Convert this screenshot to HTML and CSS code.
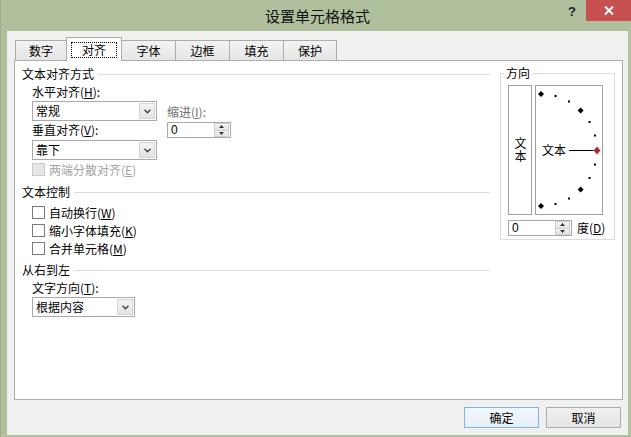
FILE: index.html
```html
<!DOCTYPE html>
<html lang="zh-CN">
<head>
<meta charset="utf-8">
<title>设置单元格格式</title>
<link rel="stylesheet" href="styles.css">
</head>
<body>
<div class="frame">
  <div class="titlebar">
    <div class="title">设置单元格格式</div>
    <div class="tb-right">
      <div class="tb-help">?</div>
      <div class="tb-close"><svg width="10" height="9" viewBox="0 0 10 9"><path d="M1 0.5 L9 8.5 M9 0.5 L1 8.5" stroke="#fff" stroke-width="2" fill="none"/></svg></div>
    </div>
  </div>
  <div class="client">
    <div class="tabs">
      <div class="tab w52">数字</div>
      <div class="tab active"><span class="focus">对齐</span></div>
      <div class="tab w55">字体</div>
      <div class="tab w55">边框</div>
      <div class="tab w55">填充</div>
      <div class="tab w54">保护</div>
    </div>
    <div class="panel">
      <div class="left">
        <div class="group-head"><span>文本对齐方式</span><i class="rule"></i></div>
        <div class="align-block">
          <div class="align-col">
            <div class="lbl">水平对齐(<u>H</u>):</div>
            <div class="select sel-a"><span class="val">常规</span><span class="dd"><svg width="7" height="5" viewBox="0 0 7 5"><path d="M0.5 0.8 L3.5 3.8 L6.5 0.8" stroke="#404040" stroke-width="1.4" fill="none"/></svg></span></div>
            <div class="lbl lbl-v">垂直对齐(<u>V</u>):</div>
            <div class="select sel-b"><span class="val">靠下</span><span class="dd"><svg width="7" height="5" viewBox="0 0 7 5"><path d="M0.5 0.8 L3.5 3.8 L6.5 0.8" stroke="#404040" stroke-width="1.4" fill="none"/></svg></span></div>
          </div>
          <div class="indent-col">
            <div class="lbl grey">缩进(<u>I</u>):</div>
            <div class="spin indent-spin">
              <span class="val">0</span>
              <span class="btns">
                <span class="sb"><svg width="5" height="3" viewBox="0 0 5 3"><path d="M0 3 L2.5 0 L5 3Z" fill="#333"/></svg></span>
                <span class="sb"><svg width="5" height="3" viewBox="0 0 5 3"><path d="M0 0 L2.5 3 L5 0Z" fill="#333"/></svg></span>
              </span>
            </div>
          </div>
        </div>
        <div class="check disabled first-check"><span class="box"></span>两端分散对齐(<u>E</u>)</div>
        <div class="group-head gh2"><span>文本控制</span><i class="rule"></i></div>
        <div class="check-list">
          <div class="check tall"><span class="box"></span>自动换行(<u>W</u>)</div>
          <div class="check tall"><span class="box"></span>缩小字体填充(<u>K</u>)</div>
          <div class="check tall"><span class="box"></span>合并单元格(<u>M</u>)</div>
        </div>
        <div class="group-head gh3"><span>从右到左</span><i class="rule"></i></div>
        <div class="lbl indent lbl-dir">文字方向(<u>T</u>):</div>
        <div class="select sel-c indent-sel"><span class="val">根据内容</span><span class="dd"><svg width="7" height="5" viewBox="0 0 7 5"><path d="M0.5 0.8 L3.5 3.8 L6.5 0.8" stroke="#404040" stroke-width="1.4" fill="none"/></svg></span></div>
      </div>
      <fieldset class="orient">
        <legend>方向</legend>
        <div class="orient-boxes">
          <div class="vtext"><span class="vword">文本</span></div>
          <div class="dial">
            <svg width="66" height="128" viewBox="0 0 66 128">
              <g fill="#000">
                <path d="M5 5 L8 8 L5 11 L2 8Z"/>
                <path d="M44.6 21.4 L47.6 24.4 L44.6 27.4 L41.6 24.4Z"/>
                <path d="M44.6 100.6 L47.6 103.6 L44.6 106.6 L41.6 103.6Z"/>
                <path d="M5 117 L8 120 L5 123 L2 120Z"/>
                <rect x="18.5" y="9" width="2" height="2"/>
                <rect x="32" y="14.5" width="2" height="2"/>
                <rect x="52.5" y="35" width="2" height="2"/>
                <rect x="58" y="48.5" width="2" height="2"/>
                <rect x="58" y="77.5" width="2" height="2"/>
                <rect x="52.5" y="91" width="2" height="2"/>
                <rect x="32" y="111.5" width="2" height="2"/>
                <rect x="18.5" y="117" width="2" height="2"/>
              </g>
              <line x1="33" y1="64.5" x2="59" y2="64.5" stroke="#000" stroke-width="1"/>
              <path d="M61 60.5 L64.5 64.5 L61 68.5 L57.5 64.5Z" fill="#a3282b" stroke="#e9a7a5" stroke-width="0.6"/>
              <text x="6" y="68.8" class="dial-text">文本</text>
            </svg>
          </div>
        </div>
        <div class="deg-row">
          <div class="spin deg-spin">
            <span class="val">0</span>
            <span class="btns">
              <span class="sb"><svg width="5" height="3" viewBox="0 0 5 3"><path d="M0 3 L2.5 0 L5 3Z" fill="#333"/></svg></span>
              <span class="sb"><svg width="5" height="3" viewBox="0 0 5 3"><path d="M0 0 L2.5 3 L5 0Z" fill="#333"/></svg></span>
            </span>
          </div>
          <span class="deg-lbl">度(<u>D</u>)</span>
        </div>
      </fieldset>
    </div>
    <div class="buttons">
      <button class="btn default">确定</button>
      <button class="btn">取消</button>
    </div>
  </div>
</div>
</body>
</html>
```

FILE: styles.css
```css
html, body {
  margin: 0;
  padding: 0;
}
body {
  width: 631px;
  height: 437px;
  overflow: hidden;
  font-family: "Noto Sans CJK SC", "Noto Sans CJK JP", sans-serif;
  font-size: 12px;
  color: #000;
}
u { text-decoration: underline; text-underline-offset: 1px; }

.frame {
  height: 437px;
  background: #b0bf9c;
  display: flex;
  flex-direction: column;
  box-sizing: border-box;
  border-left: 1px solid #9fae8a;
}

/* title bar */
.titlebar {
  flex: none;
  height: 31px;
  display: grid;
  grid-template-columns: 1fr auto 1fr;
}
.title {
  grid-column: 2;
  font-size: 15px;
  line-height: 31px;
  color: #111;
  padding-left: 3px;
}
.tb-right {
  grid-column: 3;
  display: flex;
  justify-content: flex-end;
  align-items: flex-start;
}
.tb-help {
  width: 14px;
  margin-right: 7px;
  text-align: center;
  font-family: "Liberation Sans", sans-serif;
  font-weight: bold;
  font-size: 13px;
  line-height: 24px;
  color: #222;
}
.tb-close {
  width: 45px;
  height: 21px;
  margin-right: 0;
  background: #c75050;
  display: flex;
  align-items: center;
  justify-content: center;
}

/* client area */
.client {
  flex: 1;
  margin: 0 3px 2px 6px;
  background: #f0f0f0;
  padding: 6px 5px 0 7px;
}

/* tabs */
.tabs {
  display: flex;
  align-items: flex-end;
  height: 23px;
  padding-left: 1px;
}
.tab {
  height: 20px;
  box-sizing: border-box;
  border: 1px solid #acacac;
  border-bottom: none;
  background: linear-gradient(#f3f3f3, #e6e6e6);
  display: flex;
  align-items: center;
  justify-content: center;
  line-height: 14px;
}
.tab + .tab { margin-left: -1px; }
.w52 { width: 52px; }
.w55 { width: 55px; }
.w54 { width: 54px; }
.tab.active {
  width: 56px;
  height: 24px;
  margin-bottom: -1px;
  background: #fff;
  position: relative;
  z-index: 1;
}
.focus {
  display: block;
  width: 46px;
  height: 16px;
  box-sizing: border-box;
  border: 1px dotted #000;
  text-align: center;
  line-height: 14px;
  margin-top: 1px;
}

/* main panel */
.panel {
  height: 340px;
  box-sizing: border-box;
  border: 1px solid #adadad;
  background: #fff;
  display: flex;
  align-items: flex-start;
  padding: 6px 7px 0 7px;
}
.left {
  width: 468px;
  flex: none;
}
.group-head {
  display: flex;
  align-items: center;
  height: 14px;
  line-height: 14px;
}
.rule {
  flex: 1;
  height: 0;
  border-top: 1px solid #dcdcdc;
  margin-left: 4px;
}
.gh2 { margin-top: 9px; }
.gh3 { margin-top: 6px; }

.lbl {
  height: 14px;
  line-height: 14px;
  white-space: nowrap;
}
.grey { color: #6f6f6f; }
.align-block {
  display: flex;
  margin-top: 4px;
  padding-left: 10px;
}
.align-col { width: 125px; }
.lbl-v { margin-top: 2px; }
.indent-col { margin-left: 10px; }
.indent-col .lbl { margin-top: 20px; }
.indent-spin { margin-top: 3px; }

.select {
  box-sizing: border-box;
  height: 20px;
  border: 1px solid #a9a9a9;
  background: #fff;
  display: flex;
  align-items: center;
  padding-left: 3px;
}
.select .val { flex: 1; line-height: 14px; }
.sel-a { margin-top: 2px; }
.sel-b { margin-top: 3px; }
.sel-c { width: 103px; }
.dd {
  width: 16px;
  height: 16px;
  margin-right: 1px;
  box-sizing: border-box;
  border: 1px solid #d4d4d4;
  background: linear-gradient(#f4f4f4, #e4e4e4);
  display: flex;
  align-items: center;
  justify-content: center;
}

.spin {
  box-sizing: border-box;
  width: 64px;
  height: 16px;
  border: 1px solid #a9a9a9;
  background: #fff;
  display: flex;
}
.spin .val {
  flex: 1;
  padding-left: 3px;
  line-height: 14px;
  font-family: "Liberation Sans", sans-serif;
}
.spin .btns {
  width: 15px;
  margin: 0 1px 0 0;
  display: flex;
  flex-direction: column;
}
.sb {
  flex: 1;
  box-sizing: border-box;
  border: 1px solid #cfcfcf;
  background: linear-gradient(#f4f4f4, #e2e2e2);
  display: flex;
  align-items: center;
  justify-content: center;
}
.sb + .sb { border-top: none; }

.check {
  display: flex;
  align-items: center;
  height: 14px;
  padding-left: 10px;
  white-space: nowrap;
}
.check.tall { height: 18px; }
.first-check { margin-top: 2px; }
.check-list { margin-top: 4px; }
.box {
  width: 13px;
  height: 13px;
  box-sizing: border-box;
  border: 1px solid #7a7a7a;
  background: #fff;
  margin-right: 4px;
  flex: none;
}
.check.disabled { color: #a3a3a3; }
.check.disabled .box {
  border-color: #c9c9c9;
  background: #e6e6e6;
}
.indent { padding-left: 10px; }
.lbl-dir { margin-top: 4px; }
.indent-sel { margin-left: 10px; margin-top: 2px; }

/* orientation group */
.orient {
  margin: -1px 0 0 10px;
  width: 115px;
  min-width: 0;
  box-sizing: border-box;
  border: 1px solid #dcdcdc;
  padding: 0 0 3px 7px;
}
.orient legend {
  padding: 0 2px;
  margin-left: -4px;
  line-height: 14px;
}
.orient-boxes {
  display: flex;
  margin-top: 5px;
  gap: 3px;
}
.vtext {
  width: 24px;
  height: 130px;
  box-sizing: border-box;
  border: 1px solid #a0a0a0;
  display: flex;
  align-items: center;
  justify-content: center;
}
.vword {
  writing-mode: vertical-rl;
  text-orientation: upright;
  font-size: 12px;
  line-height: 12px;
  letter-spacing: 1px;
}
.dial {
  width: 68px;
  height: 130px;
  box-sizing: border-box;
  border: 1px solid #a0a0a0;
}
.dial svg { display: block; }
.dial-text {
  font-family: "Noto Sans CJK SC", sans-serif;
  font-size: 12px;
  fill: #000;
}
.deg-row {
  display: flex;
  align-items: center;
  margin-top: 5px;
}
.deg-lbl {
  margin-left: 5px;
  line-height: 14px;
}

/* bottom buttons */
.buttons {
  display: flex;
  justify-content: flex-end;
  gap: 7px;
  margin-top: 7px;
  padding-right: 2px;
}
.btn {
  width: 75px;
  height: 21px;
  box-sizing: border-box;
  border: 1px solid #acacac;
  background: linear-gradient(#f0f0f0, #e5e5e5);
  font-family: inherit;
  font-size: 12px;
  color: #000;
  padding: 0;
  line-height: 14px;
}
.btn.default {
  border-color: #7eb4ea;
  background: linear-gradient(#f2f7fc, #e6eef7);
}
```
